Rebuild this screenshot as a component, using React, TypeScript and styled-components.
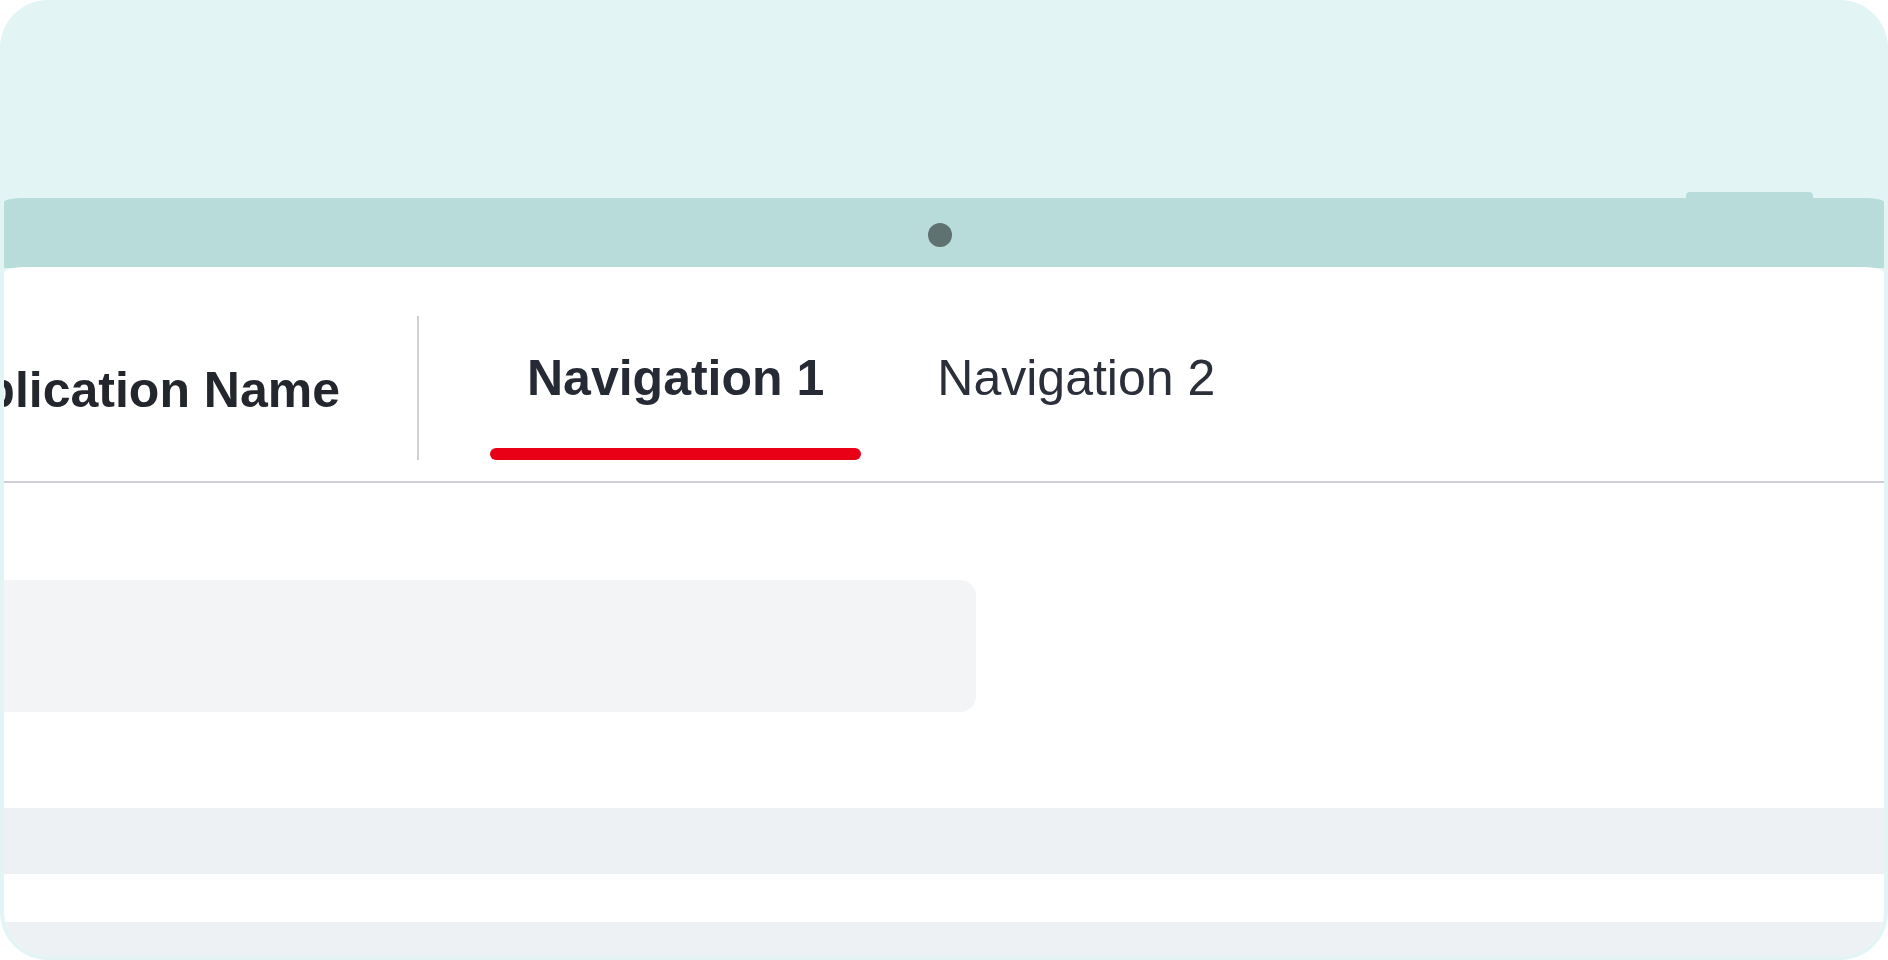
import styled, { createGlobalStyle } from "styled-components";

const GlobalStyle = createGlobalStyle`
  html, body {
    margin: 0;
    padding: 0;
    background: #ffffff;
  }
  body {
    font-family: "Liberation Sans", Arial, sans-serif;
  }
`;

const Frame = styled.div`
  width: 1888px;
  height: 960px;
  background: #e2f4f4;
  border-radius: 48px;
  overflow: hidden;
  display: flex;
  flex-direction: column;
`;

const TopArea = styled.div`
  height: 198px;
  flex-shrink: 0;
  display: flex;
  align-items: flex-end;
  justify-content: flex-end;
  padding-right: 75px;
  box-sizing: border-box;
`;

const PowerButton = styled.div`
  width: 127px;
  height: 6px;
  background: #b7dcda;
  border-radius: 4px 4px 0 0;
`;

const Device = styled.div`
  flex: 1;
  margin: 0 4px 4px;
  display: flex;
  flex-direction: column;
  min-height: 0;
`;

const CameraBar = styled.div`
  height: 70px;
  flex-shrink: 0;
  background: #b7dcda;
  border-radius: 20px 20px 0 0 / 4px 4px 0 0;
  display: flex;
  align-items: center;
  justify-content: center;
  padding: 4px 8px 0 0;
  box-sizing: border-box;
`;

const Camera = styled.div`
  width: 24px;
  height: 24px;
  border-radius: 50%;
  background: #5f7170;
`;

const Screen = styled.div`
  flex: 1;
  background: #ffffff;
  border-radius: 20px 20px 44px 44px / 6px 6px 44px 44px;
  overflow: hidden;
  display: flex;
  flex-direction: column;
  margin-top: -1px;
`;

const Header = styled.header`
  display: flex;
  align-items: stretch;
  padding: 49px 0 21px;
  border-bottom: 2px solid #cfd0d5;
  flex-shrink: 0;
`;

const Brand = styled.div`
  width: 336px;
  height: 144px;
  display: flex;
  justify-content: flex-end;
  overflow: hidden;
  margin-right: 77px;
`;

const AppName = styled.span`
  white-space: nowrap;
  font-size: 50px;
  line-height: 60px;
  font-weight: 700;
  color: #23262c;
  padding-top: 44px;
`;

const Divider = styled.div`
  width: 2px;
  background: #cfd0d5;
  margin-right: 71px;
`;

const Nav = styled.nav`
  display: flex;
  gap: 39px;
`;

const NavItem = styled.a<{ $active?: boolean }>`
  display: flex;
  flex-direction: column;
  justify-content: space-between;
  padding-top: 32px;
  cursor: pointer;
  text-decoration: none;
`;

const NavLabel = styled.span<{ $active?: boolean }>`
  padding: 0 37px;
  font-size: 50px;
  line-height: 60px;
  font-weight: ${(p) => (p.$active ? 700 : 400)};
  color: ${(p) => (p.$active ? "#262a34" : "#2a2f3a")};
  white-space: nowrap;
`;

const Underline = styled.div<{ $active?: boolean }>`
  height: 12px;
  border-radius: 6px;
  background: ${(p) => (p.$active ? "#ea0016" : "transparent")};
`;

const Content = styled.main`
  display: flex;
  flex-direction: column;
  padding-top: 97px;
`;

const Placeholder = styled.div`
  width: 972px;
  height: 132px;
  background: #f3f4f6;
  border-radius: 0 16px 16px 0;
`;

const Stripe = styled.div<{ $top: number }>`
  height: 66px;
  margin-top: ${(p) => p.$top}px;
  background: #edf1f3;
`;

const navItems = [
  { label: "Navigation 1", active: true },
  { label: "Navigation 2", active: false },
];

function App() {
  return (
    <>
      <GlobalStyle />
      <Frame>
        <TopArea>
          <PowerButton />
        </TopArea>
        <Device>
          <CameraBar>
            <Camera />
          </CameraBar>
          <Screen>
            <Header>
              <Brand>
                <AppName>Application Name</AppName>
              </Brand>
              <Divider />
              <Nav>
                {navItems.map((item) => (
                  <NavItem key={item.label} $active={item.active}>
                    <NavLabel $active={item.active}>{item.label}</NavLabel>
                    <Underline $active={item.active} />
                  </NavItem>
                ))}
              </Nav>
            </Header>
            <Content>
              <Placeholder />
              <Stripe $top={96} />
              <Stripe $top={48} />
            </Content>
          </Screen>
        </Device>
      </Frame>
    </>
  );
}

export default App;
